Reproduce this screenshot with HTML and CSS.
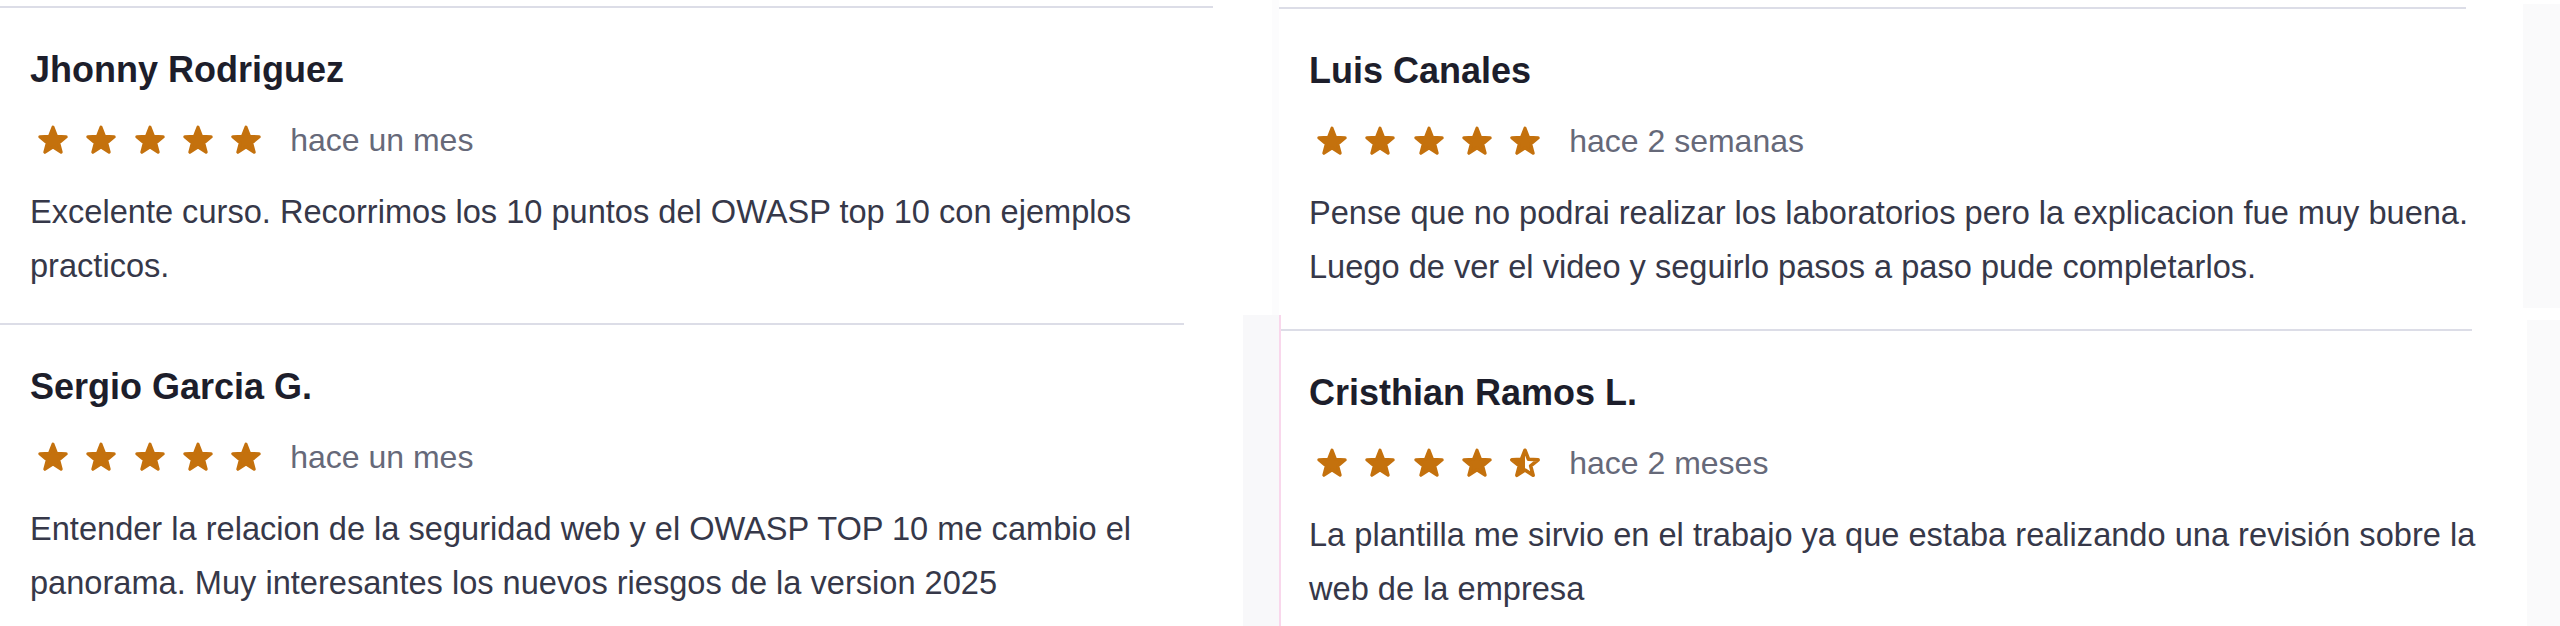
FILE: index.html
```html
<!DOCTYPE html>
<html lang="es">
<head>
<meta charset="utf-8">
<title>Reseñas</title>
<link rel="stylesheet" href="styles.css">
</head>
<body>
<svg class="defs" width="0" height="0" aria-hidden="true">
  <defs>
    <polygon id="star-shape" points="16,4 19.29,12.47 28.36,12.98 21.33,18.73 23.64,27.52 16,22.6 8.36,27.52 10.67,18.73 3.64,12.98 12.71,12.47"/>
    <linearGradient id="half-fill" x1="0" x2="1" y1="0" y2="0">
      <stop offset="50%" stop-color="#c4710d"/>
      <stop offset="50%" stop-color="#ffffff"/>
    </linearGradient>
  </defs>
</svg>

<main class="collage">
  <div class="row row-top">
    <section class="panel">
      <article class="review review-tl">
        <h3 class="name">Jhonny Rodriguez</h3>
        <div class="meta">
          <div class="stars">
            <svg class="star" viewBox="0 0 32 32"><use href="#star-shape"/></svg>
            <svg class="star" viewBox="0 0 32 32"><use href="#star-shape"/></svg>
            <svg class="star" viewBox="0 0 32 32"><use href="#star-shape"/></svg>
            <svg class="star" viewBox="0 0 32 32"><use href="#star-shape"/></svg>
            <svg class="star" viewBox="0 0 32 32"><use href="#star-shape"/></svg>
          </div>
          <span class="when">hace un mes</span>
        </div>
        <p class="text">Excelente curso. Recorrimos los 10 puntos del OWASP top 10 con ejemplos<br>practicos.</p>
      </article>
    </section>
    <div class="strip strip-faint"></div>
    <section class="panel">
      <article class="review review-tr">
        <h3 class="name">Luis Canales</h3>
        <div class="meta">
          <div class="stars">
            <svg class="star" viewBox="0 0 32 32"><use href="#star-shape"/></svg>
            <svg class="star" viewBox="0 0 32 32"><use href="#star-shape"/></svg>
            <svg class="star" viewBox="0 0 32 32"><use href="#star-shape"/></svg>
            <svg class="star" viewBox="0 0 32 32"><use href="#star-shape"/></svg>
            <svg class="star" viewBox="0 0 32 32"><use href="#star-shape"/></svg>
          </div>
          <span class="when">hace 2 semanas</span>
        </div>
        <p class="text">Pense que no podrai realizar los laboratorios pero la explicacion fue muy buena.<br>Luego de ver el video y seguirlo pasos a paso pude completarlos.</p>
      </article>
    </section>
    <div class="blank"></div>
    <div class="strip strip-edge strip-edge-top"></div>
  </div>

  <div class="row row-bottom">
    <section class="panel">
      <article class="review review-bl">
        <h3 class="name">Sergio Garcia G.</h3>
        <div class="meta">
          <div class="stars">
            <svg class="star" viewBox="0 0 32 32"><use href="#star-shape"/></svg>
            <svg class="star" viewBox="0 0 32 32"><use href="#star-shape"/></svg>
            <svg class="star" viewBox="0 0 32 32"><use href="#star-shape"/></svg>
            <svg class="star" viewBox="0 0 32 32"><use href="#star-shape"/></svg>
            <svg class="star" viewBox="0 0 32 32"><use href="#star-shape"/></svg>
          </div>
          <span class="when">hace un mes</span>
        </div>
        <p class="text">Entender la relacion de la seguridad web y el OWASP TOP 10 me cambio el<br>panorama. Muy interesantes los nuevos riesgos de la version 2025</p>
      </article>
    </section>
    <div class="strip strip-gray"></div>
    <div class="strip strip-pink"></div>
    <section class="panel">
      <article class="review review-br">
        <h3 class="name">Cristhian Ramos L.</h3>
        <div class="meta">
          <div class="stars">
            <svg class="star" viewBox="0 0 32 32"><use href="#star-shape"/></svg>
            <svg class="star" viewBox="0 0 32 32"><use href="#star-shape"/></svg>
            <svg class="star" viewBox="0 0 32 32"><use href="#star-shape"/></svg>
            <svg class="star" viewBox="0 0 32 32"><use href="#star-shape"/></svg>
            <svg class="star star-half" viewBox="0 0 32 32"><use href="#star-shape"/></svg>
          </div>
          <span class="when">hace 2 meses</span>
        </div>
        <p class="text">La plantilla me sirvio en el trabajo ya que estaba realizando una revisión sobre la<br>web de la empresa</p>
      </article>
    </section>
    <div class="blank"></div>
    <div class="strip strip-edge strip-edge-bottom"></div>
  </div>
</main>
</body>
</html>
```

FILE: styles.css
```css
* {
  box-sizing: border-box;
}

html, body {
  margin: 0;
  padding: 0;
  background: #ffffff;
}

body {
  width: 2560px;
  height: 626px;
  overflow: hidden;
  font-family: "Liberation Sans", Arial, sans-serif;
}

.defs {
  position: absolute;
  width: 0;
  height: 0;
  overflow: hidden;
}

.collage {
  display: grid;
  grid-template-rows: 315px 311px;
  width: 2560px;
  height: 626px;
}

.row {
  display: grid;
  align-items: start;
  height: 100%;
}

.row-top {
  grid-template-columns: 1272px 7px 1187px 57px 37px;
}

.row-bottom {
  grid-template-columns: 1243px 36px 2px 1191px 55px 33px;
}

.panel {
  height: 100%;
}

.strip {
  height: 100%;
}

.strip-faint {
  background: #fcfcfd;
}

.strip-gray {
  background: #f8f8fa;
}

.strip-pink {
  background: #f9d7ec;
}

.strip-edge {
  background: #fafafb;
}

.strip-edge-top {
  margin-top: 4px;
  height: 304px;
}

.strip-edge-bottom {
  margin-top: 5px;
  height: 306px;
}

.review {
  border-top: 2px solid #dcdde7;
  padding: 40px 0 0 30px;
}

.review-tl {
  width: 1213px;
  margin-top: 6px;
}

.review-tr {
  width: 1187px;
  margin-top: 7px;
}

.review-bl {
  width: 1184px;
  margin-top: 8px;
}

.review-br {
  width: 1191px;
  margin-top: 14px;
  padding-left: 28px;
}

.name {
  margin: 0;
  font-size: 36px;
  line-height: 44px;
  font-weight: 700;
  color: #1d1e2b;
  white-space: nowrap;
}

.meta {
  display: flex;
  align-items: center;
  height: 40px;
  margin-top: 28px;
}

.stars {
  display: flex;
  align-items: center;
  gap: 14.3px;
  margin-left: 6px;
}

.star {
  display: block;
  width: 34px;
  height: 34px;
  fill: #c4710d;
  stroke: #c4710d;
  stroke-width: 3;
  stroke-linejoin: round;
}

.star-half {
  fill: url(#half-fill);
  stroke-width: 3.4;
}

.when {
  margin-left: 27px;
  font-size: 32px;
  line-height: 40px;
  color: #666979;
  white-space: nowrap;
}

.text {
  margin: 25px 0 0;
  font-size: 32.6px;
  line-height: 54px;
  color: #363849;
  white-space: nowrap;
}
```
